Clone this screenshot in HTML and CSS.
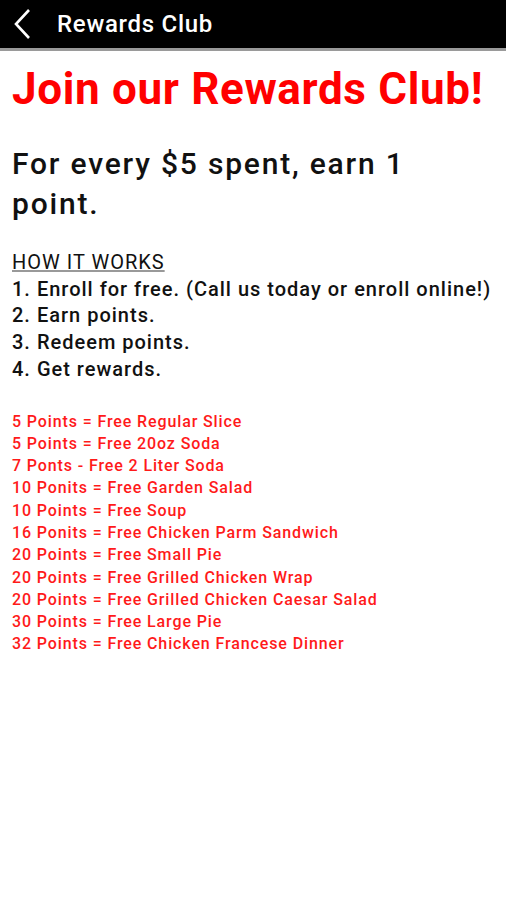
FILE: index.html
```html
<!DOCTYPE html>
<html lang="en">
<head>
<meta charset="UTF-8">
<meta name="viewport" content="width=device-width, initial-scale=1.0">
<title>Rewards Club</title>
<link rel="stylesheet" href="styles.css">
</head>
<body>
<div class="topbar">
    <svg class="back" width="20" height="32" viewBox="0 0 20 32">
        <polyline points="17,2 4,16 17,30" fill="none" stroke="#fff" stroke-width="2.6"/>
    </svg>
    <span class="title">Rewards Club</span>
</div>
<div class="content">
    <h1>Join our Rewards Club!</h1>
    <h2>For every $5 spent, earn 1 point.</h2>
    <div class="steps">
        <div class="how">HOW IT WORKS</div>
        <div>1. Enroll for free. (Call us today or enroll online!)</div>
        <div>2. Earn points.</div>
        <div>3. Redeem points.</div>
        <div>4. Get rewards.</div>
    </div>
    <ul class="rewards">
        <li>5 Points = Free Regular Slice</li>
        <li>5 Points = Free 20oz Soda</li>
        <li>7 Ponts - Free 2 Liter Soda</li>
        <li>10 Ponits = Free Garden Salad</li>
        <li>10 Points = Free Soup</li>
        <li>16 Ponits = Free Chicken Parm Sandwich</li>
        <li>20 Points = Free Small Pie</li>
        <li>20 Points = Free Grilled Chicken Wrap</li>
        <li>20 Points = Free Grilled Chicken Caesar Salad</li>
        <li>30 Points = Free Large Pie</li>
        <li>32 Points = Free Chicken Francese Dinner</li>
    </ul>
</div>
</body>
</html>
```

FILE: styles.css
```css
/* Basic styling */
body {
    font-family: Roboto, "Liberation Sans", sans-serif;
    margin: 0;
    padding: 0;
    background: #fff;
}
.topbar {
    height: 48px;
    background-color: #000;
    border-bottom: 3px solid #9a9a9a;
    display: flex;
    align-items: center;
    padding-left: 12px;
}
.back {
    margin-right: 25px;
}
.title {
    color: #fff;
    font-size: 24px;
    font-weight: 500;
    letter-spacing: 0.03em;
}
.content {
    padding: 0 12px;
}
h1 {
    color: #ff0000;
    font-size: 44px;
    font-weight: 700;
    letter-spacing: 0.015em;
    margin: 13px 0 0;
    line-height: 50px;
    white-space: nowrap;
}
h2 {
    color: #111;
    font-size: 30px;
    font-weight: 500;
    letter-spacing: 0.06em;
    line-height: 40px;
    margin: 30px 0 0;
}
.steps {
    margin-top: 25px;
    font-size: 20px;
    font-weight: 500;
    letter-spacing: 0.05em;
    line-height: 26.7px;
    color: #111;
    white-space: nowrap;
}
.how {
    font-weight: 400;
    text-decoration: underline;
    text-decoration-color: #999;
}
.rewards {
    list-style: none;
    margin: 28px 0 0;
    padding: 0;
    color: #ff1a1a;
    font-size: 16px;
    font-weight: 500;
    letter-spacing: 0.055em;
    line-height: 22.3px;
}
```
